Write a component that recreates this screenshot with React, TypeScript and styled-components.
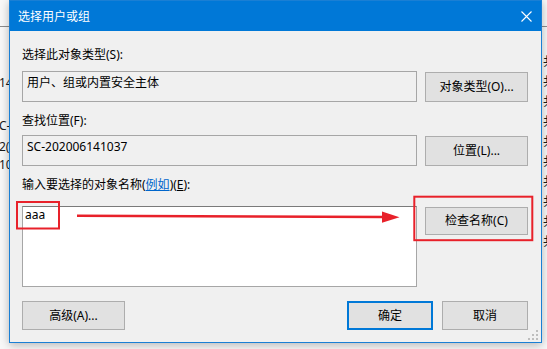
import React from 'react';
import styled, { createGlobalStyle } from 'styled-components';

const GlobalStyle = createGlobalStyle`
  html, body {
    margin: 0;
    padding: 0;
  }
  body {
    width: 547px;
    height: 349px;
    overflow: hidden;
    font-family: "Noto Sans", "Noto Sans CJK SC", sans-serif;
    font-size: 12px;
    color: #000;
  }
`;

const Desktop = styled.div`
  position: relative;
  width: 547px;
  height: 349px;
  overflow: hidden;
  background: #f8f8f8;
`;

const BackRule = styled.div<{ $top: number }>`
  position: absolute;
  left: 0;
  right: 0;
  top: ${p => p.$top}px;
  height: 1px;
  background: #8c8c8c;
`;

const BackText = styled.div<{ $top: number; $left: number }>`
  position: absolute;
  top: ${p => p.$top}px;
  left: ${p => p.$left}px;
  line-height: 16px;
  white-space: nowrap;
  color: #1a1a1a;
`;

const Dialog = styled.div`
  position: absolute;
  left: 9px;
  top: 0;
  width: 533px;
  height: 343px;
  box-sizing: border-box;
  border: 1px solid #1a7fd4;
  background: #f0f0f0;
  display: flex;
  flex-direction: column;
  box-shadow: 0 2px 9px rgba(0, 0, 0, 0.28);
  z-index: 1;
`;

const TitleBar = styled.div`
  height: 30px;
  flex: none;
  background: #0078d7;
  color: #fff;
  display: flex;
  align-items: center;
  justify-content: space-between;
  padding: 0 9px 0 8px;
`;

const TitleText = styled.span`
  line-height: 16px;
  padding-top: 1px;
`;

const Body = styled.div`
  flex: 1;
  display: flex;
  flex-direction: column;
  padding: 16px 13px 12px 12px;
`;

const FieldLabel = styled.div<{ $mt?: number }>`
  height: 16px;
  line-height: 16px;
  margin-top: ${p => p.$mt ?? 0}px;
  white-space: nowrap;
`;

const Link = styled.span`
  color: #0066cc;
  text-decoration: underline;
`;

const Key = styled.span`
  text-decoration: underline;
`;

const FieldRow = styled.div<{ $mt: number; $align?: string }>`
  display: flex;
  gap: 8px;
  margin-top: ${p => p.$mt}px;
  align-items: ${p => p.$align ?? 'flex-end'};
`;

const ReadOnlyBox = styled.div`
  flex: 1;
  height: 31px;
  box-sizing: border-box;
  border: 1px solid #a6a6a6;
  background: #f0f0f0;
  padding: 3px 0 0 4px;
  line-height: 16px;
  white-space: nowrap;
`;

const NameInput = styled.div`
  flex: 1;
  height: 81px;
  box-sizing: border-box;
  border: 1px solid #a6a6a6;
  border-top-color: #7a7a7a;
  background: #fff;
  padding: 0 0 0 2px;
  line-height: 16px;
`;

const Button = styled.button<{ $w: number; $h?: number; $primary?: boolean; $mt?: number }>`
  width: ${p => p.$w}px;
  height: ${p => p.$h ?? 30}px;
  flex: none;
  box-sizing: border-box;
  margin: ${p => p.$mt ?? 0}px 0 0 0;
  padding: 0;
  border: ${p => (p.$primary ? '2px solid #0078d7' : '1px solid #adadad')};
  background: #e1e1e1;
  font-family: inherit;
  font-size: 12px;
  line-height: 16px;
  color: #000;
  white-space: nowrap;
`;

const Footer = styled.div`
  display: flex;
  align-items: center;
  margin-top: 14px;
  gap: 9px;
`;

const Spacer = styled.div`
  flex: 1;
`;

const Grip = styled.svg`
  position: absolute;
  right: 3px;
  bottom: 2px;
`;

const Annotations = styled.svg`
  position: absolute;
  left: 0;
  top: 0;
  z-index: 2;
  pointer-events: none;
`;

const leftScraps = [
  { top: 75, text: '14' },
  { top: 118, text: 'C-2' },
  { top: 139, text: '2(' },
  { top: 157, text: '10' },
];

const rightRows = [54, 74, 94, 114, 134, 154, 174, 194, 214, 234];

export default function App() {
  return (
    <>
      <GlobalStyle />
      <Desktop>
        <BackRule $top={26} />
        {leftScraps.map(s => (
          <BackText key={s.top} $top={s.top} $left={-1}>
            {s.text}
          </BackText>
        ))}
        {rightRows.map(t => (
          <BackText key={t} $top={t} $left={543}>
            共
          </BackText>
        ))}

        <Dialog>
          <TitleBar>
            <TitleText>选择用户或组</TitleText>
            <svg width="11" height="11" viewBox="0 0 11 11">
              <path d="M0.5 0.5 L10.5 10.5 M10.5 0.5 L0.5 10.5" stroke="#fff" strokeWidth="1.1" fill="none" />
            </svg>
          </TitleBar>
          <Body>
            <FieldLabel>选择此对象类型(S):</FieldLabel>
            <FieldRow $mt={8}>
              <ReadOnlyBox>用户、组或内置安全主体</ReadOnlyBox>
              <Button $w={103}>对象类型(O)...</Button>
            </FieldRow>

            <FieldLabel $mt={11}>查找位置(F):</FieldLabel>
            <FieldRow $mt={6}>
              <ReadOnlyBox>SC-202006141037</ReadOnlyBox>
              <Button $w={103}>位置(L)...</Button>
            </FieldRow>

            <FieldLabel $mt={11}>
              输入要选择的对象名称(<Link>例如</Link>)(<Key>E</Key>):
            </FieldLabel>
            <FieldRow $mt={13} $align="flex-start">
              <NameInput>aaa</NameInput>
              <Button $w={103} $h={28} $mt={1}>
                检查名称(C)
              </Button>
            </FieldRow>

            <Footer>
              <Button $w={103} $h={29}>
                高级(A)...
              </Button>
              <Spacer />
              <Button $w={86} $h={29} $primary>
                确定
              </Button>
              <Button $w={86} $h={29}>
                取消
              </Button>
            </Footer>
          </Body>
          <Grip width="10" height="10" viewBox="0 0 10 10">
            <g fill="#bdbdbd">
              <rect x="8" y="0" width="2" height="2" />
              <rect x="4" y="4" width="2" height="2" />
              <rect x="8" y="4" width="2" height="2" />
              <rect x="0" y="8" width="2" height="2" />
              <rect x="4" y="8" width="2" height="2" />
              <rect x="8" y="8" width="2" height="2" />
            </g>
          </Grip>
        </Dialog>

        <Annotations width="547" height="349" viewBox="0 0 547 349">
          <g stroke="#e8212a" strokeWidth="2" fill="none">
            <rect x="17" y="202" width="42" height="26.5" />
            <rect x="414.3" y="196.7" width="118" height="43.5" />
          </g>
          <line x1="77" y1="215.8" x2="386" y2="217" stroke="#e8212a" strokeWidth="2.6" />
          <polygon points="382,211.5 399.5,217.2 382,222.8" fill="#e8212a" />
        </Annotations>
      </Desktop>
    </>
  );
}
